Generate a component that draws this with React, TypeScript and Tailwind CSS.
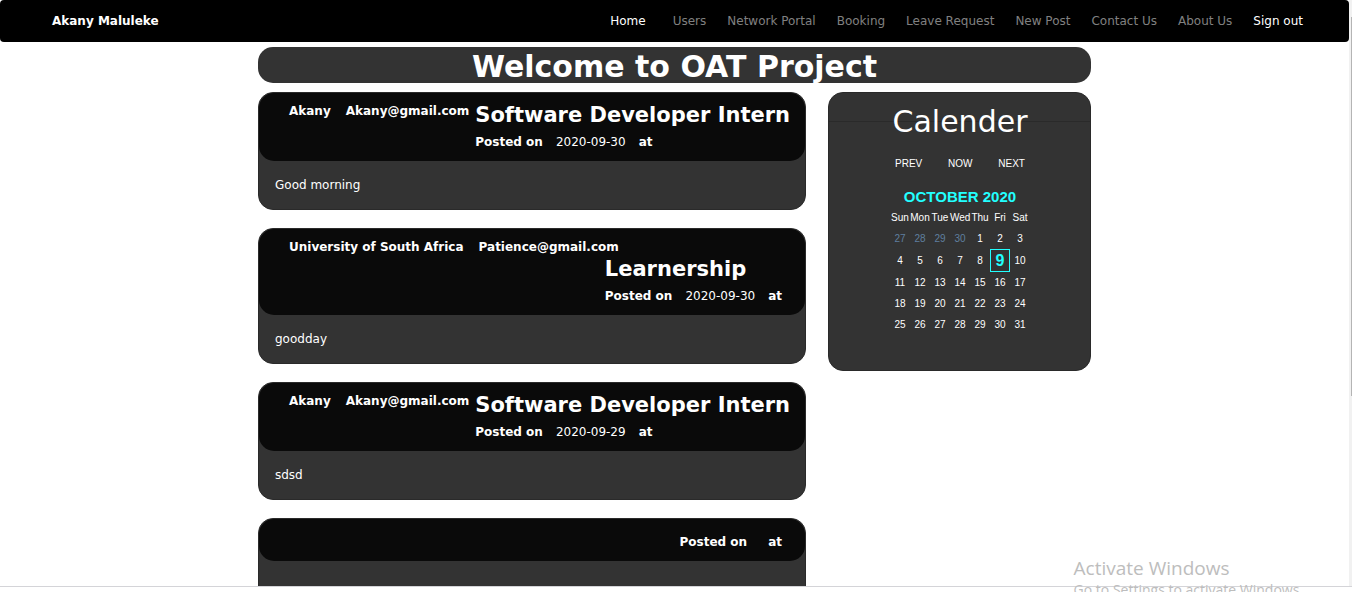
const navLinks = [
  'Users',
  'Network Portal',
  'Booking',
  'Leave Request',
  'New Post',
  'Contact Us',
  'About Us',
];

type Post = {
  author?: string;
  email?: string;
  title?: string;
  date?: string;
  body: string;
};

const posts: Post[] = [
  { author: 'Akany', email: 'Akany@gmail.com', title: 'Software Developer Intern', date: '2020-09-30', body: 'Good morning' },
  { author: 'University of South Africa', email: 'Patience@gmail.com', title: 'Learnership', date: '2020-09-30', body: 'goodday' },
  { author: 'Akany', email: 'Akany@gmail.com', title: 'Software Developer Intern', date: '2020-09-29', body: 'sdsd' },
  { body: '' },
];

const dayNames = ['Sun', 'Mon', 'Tue', 'Wed', 'Thu', 'Fri', 'Sat'];
const weeks = [
  [27, 28, 29, 30, 1, 2, 3],
  [4, 5, 6, 7, 8, 9, 10],
  [11, 12, 13, 14, 15, 16, 17],
  [18, 19, 20, 21, 22, 23, 24],
  [25, 26, 27, 28, 29, 30, 31],
];
const today = 9;

function NavBar() {
  return (
    <nav className="flex h-[42px] shrink-0 items-center justify-between rounded bg-black pr-[46px] pb-px pl-[52px]">
      <a href="#profile" className="font-bold text-white">
        Akany Maluleke
      </a>
      <div className="flex items-center gap-[21px] whitespace-nowrap">
        <a href="#home" className="mr-1.5 text-white">
          Home
        </a>
        {navLinks.map((label) => (
          <a key={label} href="#" className="text-[#808080]">
            {label}
          </a>
        ))}
        <a href="#signout" className="text-white">
          Sign out
        </a>
      </div>
    </nav>
  );
}

function PostCard({ post }: { post: Post }) {
  return (
    <article className="rounded-[15px] border border-[#2a2a2a] bg-[#333333]">
      <header className="flex flex-wrap items-start rounded-[15px] bg-[#0a0a0a] pt-[9px] pr-[15px] pb-2.5 pl-[30px]">
        {post.author && (
          <p className="flex gap-[15px] font-bold">
            <span>{post.author}</span>
            <span>{post.email}</span>
          </p>
        )}
        <div className="ml-auto">
          {post.title && <h2 className="text-[21px] leading-[26px] font-bold">{post.title}</h2>}
          <p className={post.date ? 'mt-[5px] flex gap-[13px] pr-2' : 'mt-[5px] flex gap-[21px] pr-2'}>
            <b>Posted on</b>
            {post.date && <span>{post.date}</span>}
            <b>at</b>
          </p>
        </div>
      </header>
      <p className="min-h-12 px-4 py-[15px]">{post.body}</p>
    </article>
  );
}

function Calendar() {
  return (
    <aside className="relative h-[279px] w-[263px] shrink-0 rounded-[15px] border border-[#2a2a2a] bg-[#333333] pl-px text-center">
      <div className="absolute inset-x-0 top-7 border-t border-[#2a2a2a]" />
      <h2 className="relative mt-[11px] text-[30px] leading-9">Calender</h2>
      <div className="mx-auto mt-4 flex w-[130px] justify-between font-['Liberation_Sans',Arial,sans-serif] text-[10px] leading-4">
        <button type="button">PREV</button>
        <button type="button">NOW</button>
        <button type="button">NEXT</button>
      </div>
      <table className="mx-auto mt-[15px] w-[140px] table-fixed border-collapse font-['Liberation_Sans',Arial,sans-serif] text-[10px] leading-4">
        <caption className="h-5 text-[15px] leading-5 font-bold text-[#22ffff]">OCTOBER 2020</caption>
        <thead>
          <tr className="h-[21px]">
            {dayNames.map((name) => (
              <th key={name} scope="col" className="p-0 font-normal">
                {name}
              </th>
            ))}
          </tr>
        </thead>
        <tbody>
          {weeks.map((week, row) => (
            <tr key={row} className="h-[21px]">
              {week.map((day) => (
                <td key={day} className={row === 0 && day > 20 ? 'p-0 text-[#5f7f9f]' : 'p-0'}>
                  {day === today ? (
                    <span className="block h-[23px] border border-[#22ffff] text-base leading-[21px] font-bold text-[#22ffff]">
                      {day}
                    </span>
                  ) : (
                    day
                  )}
                </td>
              ))}
            </tr>
          ))}
        </tbody>
      </table>
    </aside>
  );
}

export default function App() {
  return (
    <div className="relative flex h-screen flex-col overflow-hidden bg-white font-['DejaVu_Sans',Verdana,sans-serif] text-[12px] leading-[18px] text-white">
      <div className="flex min-h-0 flex-1">
        <div className="min-w-0 flex-1 overflow-hidden">
          <NavBar />
          <main className="mx-auto mt-[5px] max-w-[833px]">
            <h1 className="rounded-[15px] bg-[#333333] pt-1 text-center text-[30px] leading-8 font-bold">
              Welcome to OAT Project
            </h1>
            <div className="mt-[9px] flex items-start gap-[22px]">
              <section className="flex min-w-0 flex-1 flex-col gap-[18px]">
                {posts.map((post, index) => (
                  <PostCard key={index} post={post} />
                ))}
              </section>
              <Calendar />
            </div>
          </main>
        </div>
        <div className="flex w-[3px] justify-end bg-[#f1f1f1] pt-[17px]">
          <div className="h-2/3 w-px bg-[#b4b4b4]" />
        </div>
      </div>
      <div className="h-1.5 shrink-0 border-t border-[#d4d4d8] bg-white" />
      <div className="absolute right-[49px] -bottom-2 font-['Open_Sans','Noto_Sans',sans-serif] whitespace-nowrap text-[#bdbdbd]">
        <p className="text-[19px] leading-6">Activate Windows</p>
        <p className="text-[14px] leading-5">Go to Settings to activate Windows.</p>
      </div>
    </div>
  );
}
